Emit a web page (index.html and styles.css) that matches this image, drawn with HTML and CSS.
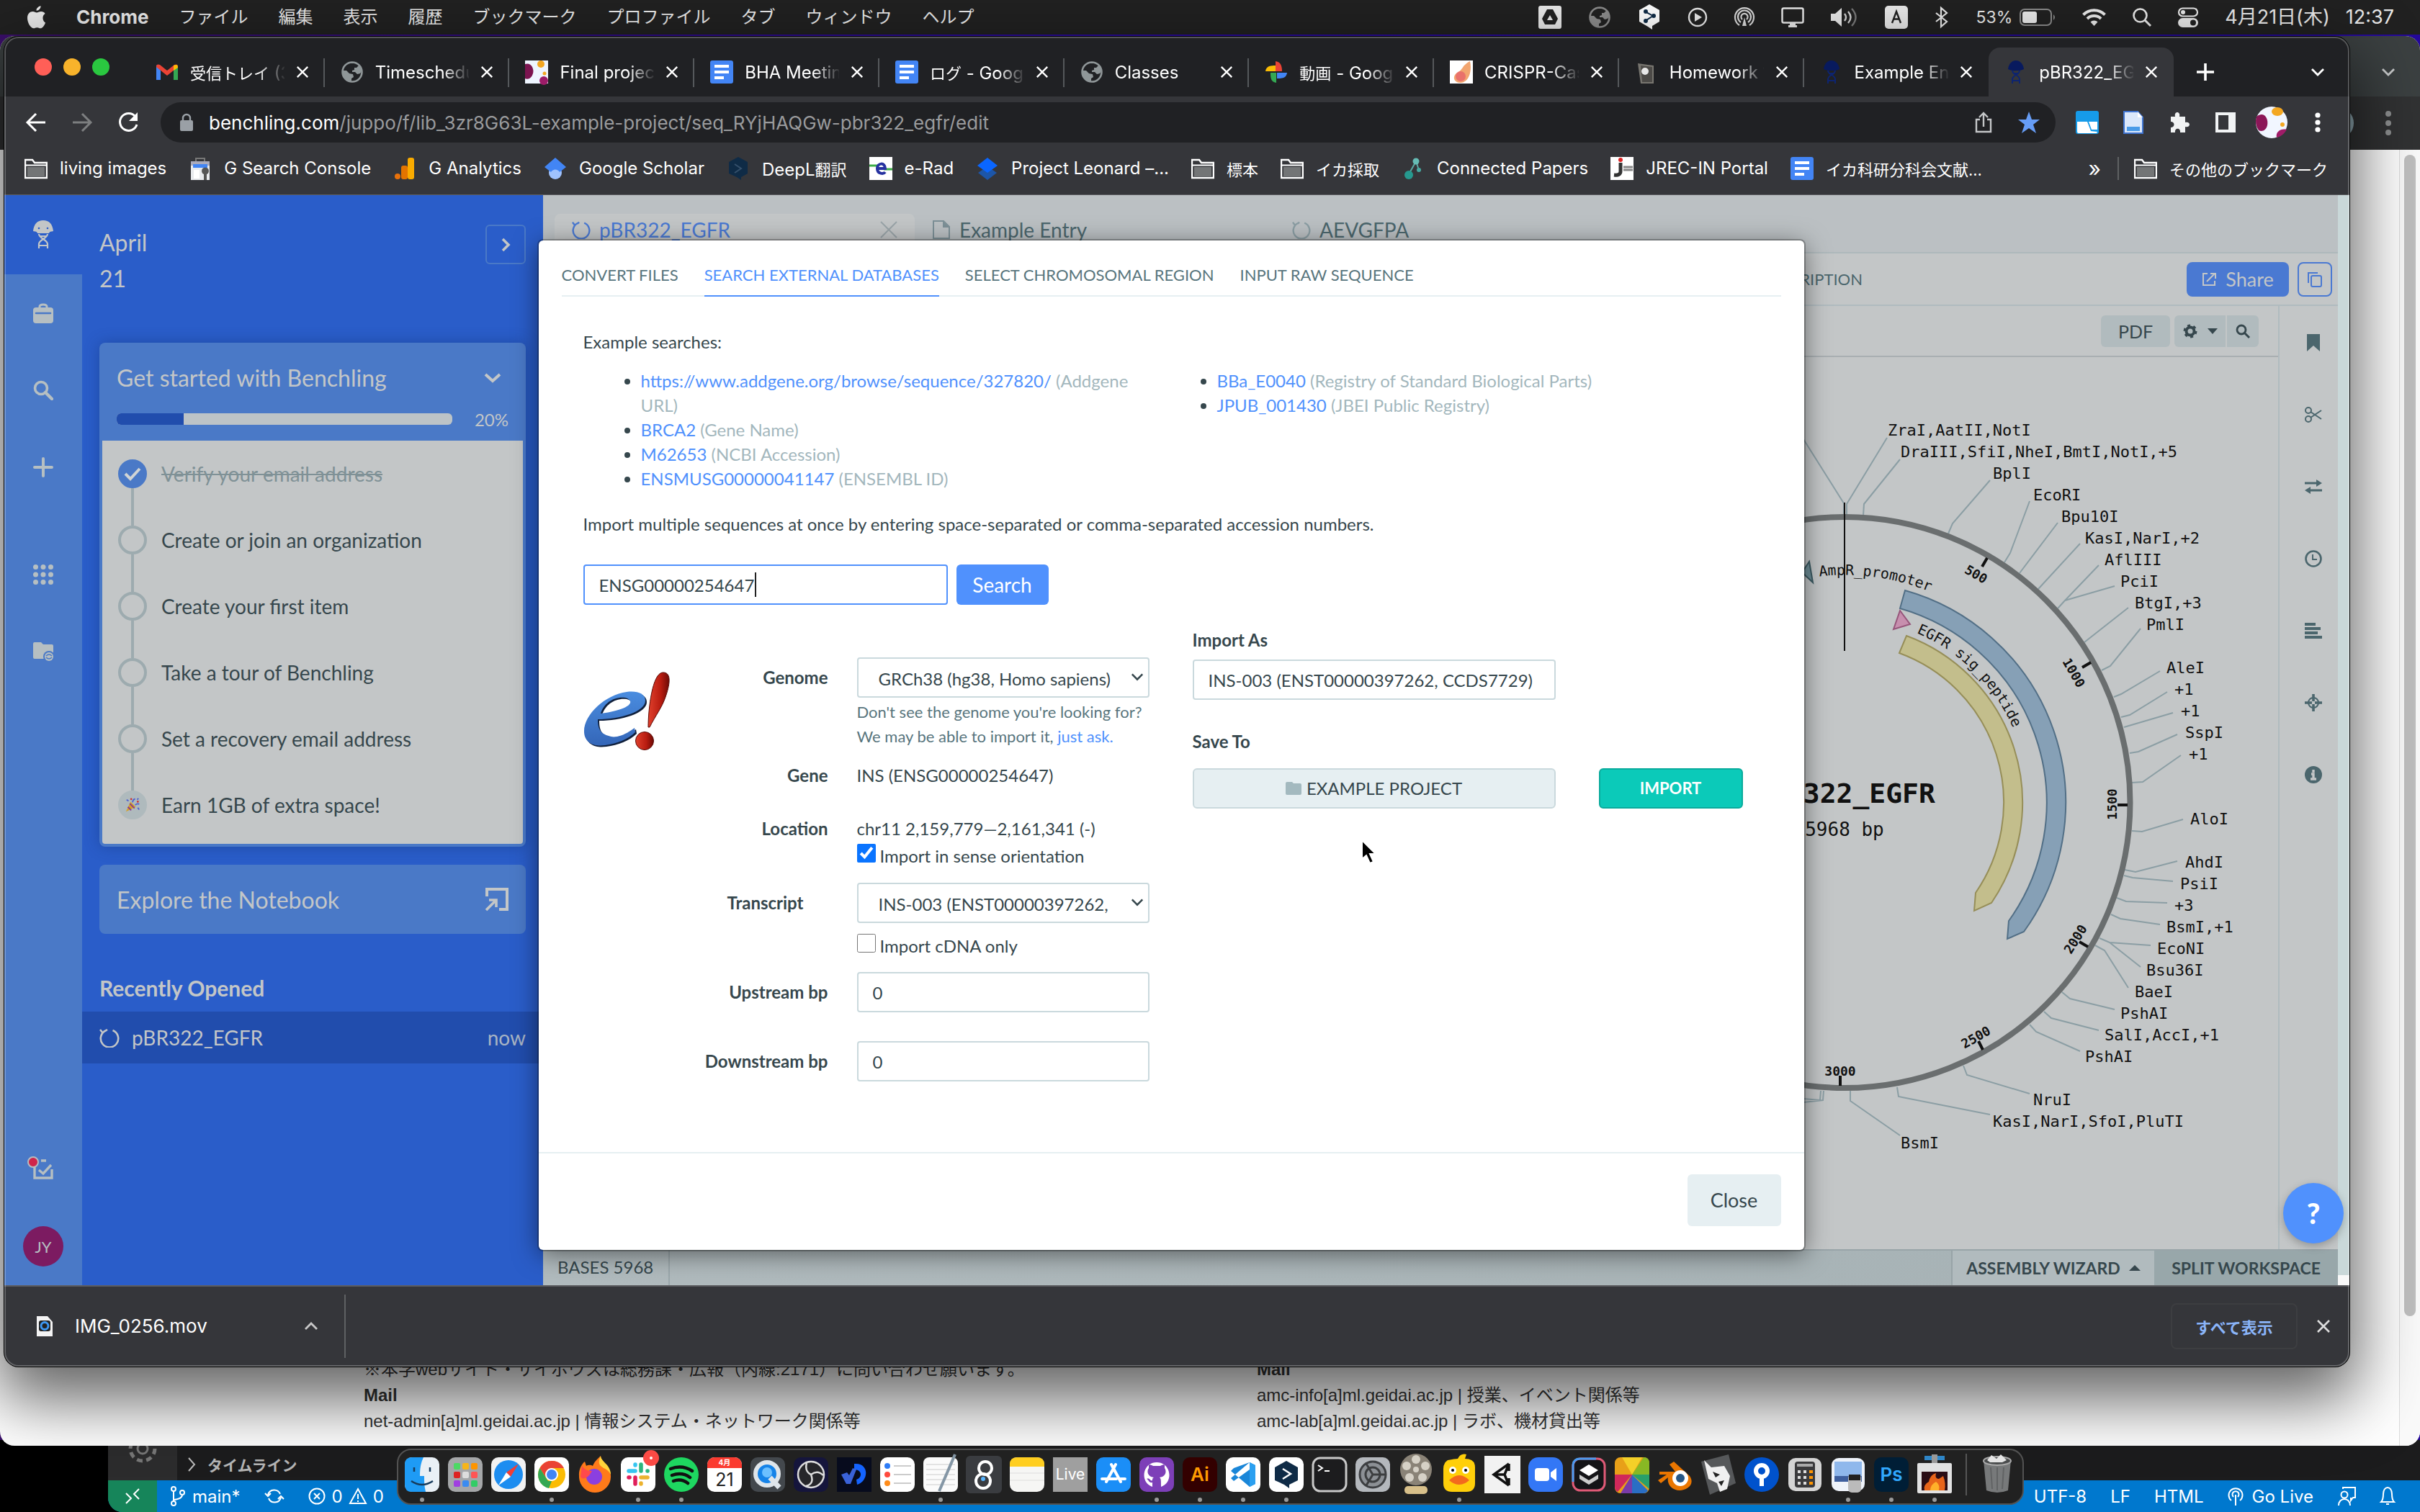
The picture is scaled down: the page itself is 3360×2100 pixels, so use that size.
FILE: index.html
```html
<!DOCTYPE html>
<html lang="ja">
<head>
<meta charset="utf-8">
<title>pBR322_EGFR · Benchling</title>
<link rel="stylesheet" href="styles.css">
</head>
<body>
<svg class="sprite" aria-hidden="true">
  <symbol id="i-x" viewBox="0 0 20 20"><path d="M2 2l16 16M18 2L2 18" fill="none" stroke="currentColor" stroke-width="2.6"/></symbol>
  <symbol id="i-down" viewBox="0 0 20 20"><path d="M2 6l8 8 8-8" fill="none" stroke="currentColor" stroke-width="2.800"/></symbol>
  <symbol id="i-folder" viewBox="0 0 32 32"><path d="M1 29V4h10l3 4h17v21z" fill="none" stroke="#fff" stroke-width="2.4"/><path d="M4 14h24v13H4z" fill="#737576"/><path d="M2 11.500h28" stroke="#fff" stroke-width="2"/></symbol>
  <symbol id="i-docs" viewBox="0 0 32 32"><rect width="32" height="32" rx="3" fill="#4385f5"/><path d="M6 8h20M6 16h20M6 24h13" stroke="#fff" stroke-width="4"/></symbol>
  <symbol id="i-globe" viewBox="0 0 32 32"><circle cx="16" cy="16" r="13.500" fill="none" stroke="currentColor" stroke-width="2.600"/><path d="M3 14l5 0 4 4 5 1 1 4-3 2v5C7 29 2 23 3 14zM13 4h9l3 3-3 3h-3v3l-3 1v2l4 0 3 3 4-1 2-3c0-8-6-13-13-13z" fill="currentColor"/></symbol>
  <symbol id="i-jelly" viewBox="0 0 28 40"><path d="M0 15C1 5 6 0 14 0s13 5 14 15c-3 1-5 0-6 3H6c-1-3-3-2-6-3z" fill="currentColor"/><circle cx="8" cy="11" r="1.300" fill="#2a5dc9"/><circle cx="20" cy="11" r="1.300" fill="#2a5dc9"/><path d="M8 19c0 6 12 8 12 14v6M20 19c0 6-12 8-12 14v6M9 22h10M9 35h10" fill="none" stroke="currentColor" stroke-width="2.200"/></symbol>
  <symbol id="i-plasmid" viewBox="0 0 28 28"><path d="M9.500 4a12.200 12.200 0 1 0 9 0M5 8L1 3M8 5l3-2" fill="none" stroke="currentColor" stroke-width="2.600"/></symbol>
  <symbol id="i-search" viewBox="0 0 28 28"><circle cx="11" cy="11" r="8.500" fill="none" stroke="currentColor" stroke-width="3.600"/><path d="M17 17l9 9" stroke="currentColor" stroke-width="4.400" stroke-linecap="round"/></symbol>
  <symbol id="i-benchfav" viewBox="0 0 32 32"><path d="M5 12c1-8 6-12 11-12s10 4 11 12c-5 3-17 3-22 0z" fill="#081a5e"/><path d="M11 14c0 6 10 6 10 12v6M21 14c0 6-10 6-10 12v6M12 18h8M12 28h8" fill="none" stroke="#0d2470" stroke-width="2"/></symbol>
</svg>

<div class="desktop">
  <header class="menubar">
    <nav class="menus">
      <svg class="apple" viewBox="0 0 28 34"><path d="M20 0c.4 3-2.600 7-6.500 7C13 4 16.500.500 20 0zM27 25c-2 5-4.500 8.500-7.500 8.500-2 0-2.600-1.200-5-1.200s-3.200 1.200-5 1.200C5 33.500 0 25 0 18 0 12 4 8.500 8 8.500c2.600 0 4.300 1.500 6 1.500s4-1.800 7-1.500c2 0 4.200 1 5.500 3-5 3-4 11 .500 13.500z" fill="#e8e8e8"/></svg>
      <b>Chrome</b><span>ファイル</span><span>編集</span><span>表示</span><span>履歴</span><span>ブックマーク</span><span>プロファイル</span><span>タブ</span><span>ウィンドウ</span><span>ヘルプ</span>
    </nav>
    <div class="status">
      <svg width="32" height="32" viewBox="0 0 32 32"><rect width="32" height="32" rx="3" fill="#e8e8e8"/><path d="M12 5h8l7 13-4 8H9l-4-8z" fill="#212121"/><path d="M16 13l4 7h-8z" fill="#e8e8e8"/></svg>
      <svg class="dim" width="32" height="32"><use href="#i-globe"/></svg>
      <svg width="32" height="36" viewBox="0 0 32 36"><path d="M16 0l14 8v16l-10 6v5l-6-4L2 24V8z" fill="#fff"/><path d="M12 11l9 5-9 6" fill="none" stroke="#0f2b46" stroke-width="2"/><circle cx="11" cy="10" r="3" fill="#0f2b46"/><circle cx="22" cy="16" r="3" fill="#0f2b46"/><circle cx="11" cy="23" r="3" fill="#0f2b46"/></svg>
      <svg width="28" height="28" viewBox="0 0 28 28"><circle cx="14" cy="14" r="12" fill="none" stroke="#e8e8e8" stroke-width="2.400"/><path d="M10 8l10 6-10 6z" fill="#e8e8e8"/></svg>
      <svg width="28" height="28" viewBox="0 0 28 28" fill="none" stroke="#d8d8d8" stroke-width="2.200"><path d="M7 25a13 13 0 1 1 14 0M9 21a9 9 0 1 1 10 0M11 17a4.600 4.600 0 1 1 6 0"/><path d="M14 14l3 12h-6z" fill="#d8d8d8" stroke="none"/></svg>
      <svg width="32" height="28" viewBox="0 0 32 28"><rect x="1.500" y="1.500" width="29" height="20" rx="2" fill="none" stroke="#e8e8e8" stroke-width="2.500"/><path d="M12 22h8v3h2v3H10v-3h2z" fill="#e8e8e8"/></svg>
      <svg width="38" height="28" viewBox="0 0 38 28"><path d="M0 9h6l9-8v26l-9-8H0z" fill="#e8e8e8"/><path d="M19 9q4 5 0 10M24 6q7 8 0 16" fill="none" stroke="#d0d0d0" stroke-width="2.400"/><path d="M29 2q11 12 0 24" fill="none" stroke="#777" stroke-width="2.400"/></svg>
      <svg width="32" height="32" viewBox="0 0 32 32"><rect width="32" height="32" rx="5" fill="#e8e8e8"/><path d="M10 24l6-16 6 16M12 18.500h8" fill="none" stroke="#212121" stroke-width="2.400"/></svg>
      <svg width="20" height="28" viewBox="0 0 20 28"><path d="M2 8l15 12-8 7V1l8 7L2 20" fill="none" stroke="#e8e8e8" stroke-width="2.200"/></svg>
      <span class="batt"><span>53%</span><svg width="50" height="24" viewBox="0 0 50 24"><rect x="1" y="1" width="43" height="22" rx="6" fill="none" stroke="#8a8a8a" stroke-width="2"/><rect x="4" y="4" width="20" height="16" rx="3" fill="#e8e8e8"/><path d="M47 8q4 4 0 8z" fill="#8a8a8a"/></svg></span>
      <svg width="33" height="24" viewBox="0 0 33 24" fill="none" stroke="#e8e8e8" stroke-width="4"><path d="M1.500 8.500a21 21 0 0 1 30 0M7 14a13.500 13.500 0 0 1 19 0"/><path d="M16.500 24l-5-5.500a7 7 0 0 1 10 0z" fill="#e8e8e8" stroke="none"/></svg>
      <svg width="26" height="26" viewBox="0 0 26 26"><circle cx="10.500" cy="10.500" r="9" fill="none" stroke="#e8e8e8" stroke-width="2.600"/><path d="M17 17l8 8" stroke="#e8e8e8" stroke-width="3"/></svg>
      <svg width="28" height="28" viewBox="0 0 28 28"><rect x="1" y="1.500" width="26" height="11" rx="5.500" fill="none" stroke="#e8e8e8" stroke-width="2.200"/><circle cx="7" cy="7" r="3" fill="#e8e8e8"/><rect y="15" width="28" height="13" rx="6.500" fill="#e8e8e8"/><circle cx="21" cy="21.500" r="4" fill="#212121"/></svg>
      <time><span>4月21日(木)</span><span>12:37</span></time>
    </div>
  </header>

  <section class="vscode">
    <aside class="activity"><svg width="56" height="56" viewBox="0 0 56 56"><circle cx="28" cy="28" r="17" fill="none" stroke="#777" stroke-width="5" stroke-dasharray="8 5.300"/><circle cx="28" cy="28" r="7" fill="none" stroke="#777" stroke-width="3"/></svg></aside>
    <div class="vs-main"><svg width="12" height="20" viewBox="0 0 12 20"><path d="M2 1l8 9-8 9" fill="none" stroke="#bbb" stroke-width="2"/></svg><b>タイムライン</b></div>
    <footer class="vs-status">
      <span class="remote"><svg width="24" height="24" viewBox="0 0 24 24"><path d="M3 8l7 7-7 7M21 2l-7 7 7 7" fill="none" stroke="#fff" stroke-width="2"/></svg></span>
      <span class="vs-left">
        <svg width="22" height="28" viewBox="0 0 22 28" fill="none" stroke="#fff" stroke-width="2"><circle cx="5" cy="4" r="3"/><circle cx="5" cy="24" r="3"/><circle cx="17" cy="9" r="3"/><path d="M5 7v14M17 12q0 6-12 7"/></svg><span>main*</span>
        <svg class="sync" width="28" height="24" viewBox="0 0 28 24" fill="none" stroke="#fff" stroke-width="2"><path d="M5 10a9 9 0 0 1 17-1M23 14a9 9 0 0 1-17 1M1 8l4 4 4-4M19 16l4-4 4 4"/></svg>
        <svg width="24" height="24" viewBox="0 0 24 24" fill="none" stroke="#fff" stroke-width="2"><circle cx="12" cy="12" r="10.500"/><path d="M8 8l8 8M16 8l-8 8"/></svg><span>0</span>
        <svg width="24" height="24" viewBox="0 0 24 24" fill="none" stroke="#fff" stroke-width="2"><path d="M12 2l11 20H1zM12 9v7M12 18v2"/></svg><span>0</span>
      </span>
      <span class="vs-right"><span>UTF-8</span><span>LF</span><span>HTML</span>
        <span class="golive"><svg width="22" height="26" viewBox="0 0 22 26" fill="none" stroke="#fff" stroke-width="2"><path d="M5 19a9.500 9.500 0 1 1 12 0M8 14a4.500 4.500 0 1 1 6 0M11 11v15"/></svg>Go Live</span>
        <svg width="26" height="26" viewBox="0 0 26 26" fill="none" stroke="#fff" stroke-width="2"><circle cx="10" cy="11" r="4.500"/><path d="M2 26c0-12 16-12 16 0M8 3V1h17v14h-3l-3 4v-4"/></svg>
        <svg width="22" height="26" viewBox="0 0 22 26" fill="none" stroke="#fff" stroke-width="2"><path d="M2 21q3-3 3-11c0-12 12-12 12 0q0 8 3 11zM9 24h4"/></svg>
      </span>
    </footer>
  </section>

  <section class="back-window">
    <div class="back-tabs"><svg width="20" height="20"><use href="#i-down"/></svg></div>
    <div class="back-tools"><span class="back-avatar"></span><svg width="8" height="34" viewBox="0 0 8 34"><g fill="#8d8f90"><circle cx="4" cy="4" r="4"/><circle cx="4" cy="17" r="4"/><circle cx="4" cy="30" r="4"/></g></svg></div>
    <div class="back-page">
      <div class="back-text">
        <p>※本学webサイト・サイボウズは総務課・広報（内線:2171）に問い合わせ願います。<br><b>Mail</b><br>net-admin[a]ml.geidai.ac.jp | 情報システム・ネットワーク関係等</p>
        <p><b>Mail</b><br>amc-info[a]ml.geidai.ac.jp | 授業、イベント関係等<br>amc-lab[a]ml.geidai.ac.jp | ラボ、機材貸出等</p>
      </div>
      <div class="back-scroll"><i></i></div>
    </div>
  </section>

  <section class="browser">
    <div class="tabstrip">
      <div class="lights"><i class="red"></i><i class="yellow"></i><i class="green"></i></div>
      <div class="tabs">
        <div class="tab"><svg viewBox="0 0 32 32"><path d="M1 6v21h6V14z" fill="#4285f4"/><path d="M31 6v21h-6V14z" fill="#34a853"/><path d="M1 9q0-5 5-3l10 8 10-8q5-2 5 3l-15 12z" fill="#ea4335"/><path d="M25 7q6-3 6 3l-6 4z" fill="#fbbc04"/></svg><span><span class="ja">受信トレイ</span> (3,</span><button aria-label="閉じる"><svg><use href="#i-x"/></svg></button></div>
        <div class="tab"><svg class="gl"><use href="#i-globe"/></svg><span>Timeschedule</span><button aria-label="閉じる"><svg><use href="#i-x"/></svg></button></div>
        <div class="tab"><svg viewBox="0 0 32 32"><path d="M0 0h32v32H0z" fill="#eef5ff"/><path d="M0 5c8-3 13 6 11 13s-7 9-11 7z" fill="#7b1450"/><circle cx="22" cy="5" r="5" fill="#f3a722"/><circle cx="26" cy="28" r="6" fill="#9c1c68"/><circle cx="27" cy="18" r="2.500" fill="#f3a722"/></svg><span>Final project</span><button aria-label="閉じる"><svg><use href="#i-x"/></svg></button></div>
        <div class="tab"><svg><use href="#i-docs"/></svg><span>BHA Meeting</span><button aria-label="閉じる"><svg><use href="#i-x"/></svg></button></div>
        <div class="tab"><svg><use href="#i-docs"/></svg><span><span class="ja">ログ</span> - Google</span><button aria-label="閉じる"><svg><use href="#i-x"/></svg></button></div>
        <div class="tab"><svg class="gl"><use href="#i-globe"/></svg><span>Classes</span><button aria-label="閉じる"><svg><use href="#i-x"/></svg></button></div>
        <div class="tab"><svg viewBox="0 0 32 32"><path d="M15 1c8 1 9 8 9 14h-9z" fill="#ea4335"/><path d="M31 17c-1 8-8 8-14 8v-8z" fill="#4285f4"/><path d="M16 31c-8-1-8-8-8-14h8z" fill="#34a853"/><path d="M1 15c1-8 8-8 14-8v8z" fill="#fbbc04"/></svg><span><span class="ja">動画</span> - Google</span><button aria-label="閉じる"><svg><use href="#i-x"/></svg></button></div>
        <div class="tab"><svg viewBox="0 0 32 32"><path d="M0 0h32v32H0z" fill="#fff"/><path d="M28 1c3 13-1 29-13 30C5 31 3 22 10 17c9-4 6-10 18-16z" fill="#f2a56f"/><circle cx="15" cy="22" r="7" fill="#e9716b"/></svg><span>CRISPR-Cas9</span><button aria-label="閉じる"><svg><use href="#i-x"/></svg></button></div>
        <div class="tab"><svg viewBox="0 0 32 32"><path d="M4 4l22 3v25H8z" fill="#77756f"/><path d="M8 7l16 2v21H10z" fill="#4c4a47"/><circle cx="14" cy="15" r="5" fill="#e8e8e8"/></svg><span>Homework 1</span><button aria-label="閉じる"><svg><use href="#i-x"/></svg></button></div>
        <div class="tab"><svg><use href="#i-benchfav"/></svg><span>Example Entry</span><button aria-label="閉じる"><svg><use href="#i-x"/></svg></button></div>
        <div class="tab active"><svg><use href="#i-benchfav"/></svg><span>pBR322_EGFR</span><button aria-label="閉じる"><svg><use href="#i-x"/></svg></button></div>
      </div>
      <button class="plain newtab" aria-label="新しいタブ"><svg width="24" height="24" viewBox="0 0 24 24"><path d="M12 0v24M0 12h24" stroke="#fff" stroke-width="3.600"/></svg></button>
      <button class="plain tabsearch" aria-label="タブを検索"><svg width="20" height="20"><use href="#i-down"/></svg></button>
    </div>

    <div class="toolbar">
      <button class="plain" aria-label="戻る"><svg width="28" height="28" viewBox="0 0 28 28"><path d="M27 14H3M14 2L2 14l12 12" fill="none" stroke="#fff" stroke-width="3"/></svg></button>
      <button class="plain" aria-label="進む"><svg width="28" height="28" viewBox="0 0 28 28"><path d="M1 14h24M14 2l12 12-12 12" fill="none" stroke="#7d7f80" stroke-width="3"/></svg></button>
      <button class="plain" aria-label="再読み込み"><svg width="28" height="28" viewBox="0 0 28 28"><path d="M24 6A12 12 0 1 0 26 17" fill="none" stroke="#fff" stroke-width="3"/><path d="M27 0v12H15z" fill="#fff"/></svg></button>
      <div class="urlbar">
        <svg width="18" height="24" viewBox="0 0 18 24"><rect y="9" width="18" height="15" rx="2" fill="#9aa0a6"/><path d="M4 10V6a5 5 0 0 1 10 0v4" fill="none" stroke="#9aa0a6" stroke-width="2.400"/></svg>
        <p>benchling.com<span>/juppo/f/lib_3zr8G63L-example-project/seq_RYjHAQGw-pbr322_egfr/edit</span></p>
        <svg width="24" height="30" viewBox="0 0 24 30"><path d="M7 11H2v17h20V11h-5M12 21V3M6 8l6-6 6 6" fill="none" stroke="#c4c6c8" stroke-width="2.400"/></svg>
        <svg width="30" height="30" viewBox="0 0 30 30"><path d="M15 0l4 11h11l-9 7 4 12-10-7-10 7 4-12-9-7h11z" fill="#669df6"/></svg>
      </div>
      <div class="exts">
        <svg width="32" height="32" viewBox="0 0 32 32"><rect width="32" height="32" rx="3" fill="#169be9"/><path d="M2 15h14l5 13 9 1q0 2-2 2H4q-2 0-2-2zM18 15h12v11h-8z" fill="#fff"/></svg>
        <svg width="28" height="32" viewBox="0 0 28 32"><path d="M1 1h19l7 8v22H1z" fill="#dbe8fb" stroke="#3f74d0" stroke-width="2"/><path d="M20 1v8h7z" fill="#fff"/><rect x="5" y="22" width="18" height="6" fill="#4a9be8"/></svg>
        <svg width="28" height="28" viewBox="0 0 28 28"><path d="M2 6h6c-2-8 8-8 6 0h8v8c8-2 8 8 0 6v8h-7c1-7-8-7-7 0H2v-7c6 0 6-8 0-8z" fill="#f1f3f4"/></svg>
        <svg width="28" height="28" viewBox="0 0 28 28"><path d="M2 2h24v24H2z" fill="none" stroke="#f1f3f4" stroke-width="4"/><path d="M18 2h8v24h-8z" fill="#f1f3f4"/></svg>
        <svg width="44" height="44" viewBox="0 0 44 44"><circle cx="22" cy="22" r="22" fill="#f1f6ff"/><path d="M1 14c10-8 17 2 15 12-2 8-8 9-12 7A22 22 0 0 1 1 14z" fill="#8b1758"/><ellipse cx="30" cy="7" rx="8" ry="6" fill="#f3a722"/><path d="M43 32c-8-2-16 3-14 11 7-2 11-6 14-11z" fill="#a01c68"/><circle cx="37" cy="25" r="3" fill="#f3a722"/></svg>
        <svg width="8" height="28" viewBox="0 0 8 28" fill="#fff"><circle cx="4" cy="4" r="3.600"/><circle cx="4" cy="14" r="3.600"/><circle cx="4" cy="24" r="3.600"/></svg>
      </div>
    </div>

    <nav class="bookmarks">
      <a href="#"><svg><use href="#i-folder"/></svg>living images</a>
      <a href="#"><svg viewBox="0 0 32 32"><path d="M10 6V2h12v4" fill="none" stroke="#777" stroke-width="2"/><path d="M3 6h26v26H3z" fill="#e8eaed"/><path d="M3 6h26v6H3z" fill="#aab"/><path d="M6 10h20v5H6z" fill="#4285f4"/><path d="M7 18h8v12H7z" fill="#fff"/><path d="M21 32V24a5 5 0 1 1 4 0v8z" fill="#555"/></svg>G Search Console</a>
      <a href="#"><svg viewBox="0 0 32 32"><rect x="20" y="1" width="9" height="30" rx="3" fill="#f9ab00"/><rect x="11" y="12" width="9" height="19" rx="3" fill="#e37400"/><circle cx="6" cy="27" r="4" fill="#e8710a"/></svg>G Analytics</a>
      <a href="#"><svg viewBox="0 0 32 32"><circle cx="16" cy="22" r="9" fill="#a0c3ff"/><path d="M16 1l15 13-9 7a7 7 0 0 0-12 0l-9-7z" fill="#4285f4"/></svg>Google Scholar</a>
      <a href="#"><svg viewBox="0 0 32 32"><path d="M16 0l13 7v16l-9 5v4l-6-4-11-5V7z" fill="#0f2b46"/><path d="M11 10l9 6-9 6" fill="none" stroke="#35506b" stroke-width="2"/></svg><span>DeepL<span class="ja">翻訳</span></span></a>
      <a href="#"><svg viewBox="0 0 32 32"><path d="M0 0h32v32H0z" fill="#fff"/><path d="M0 12h12M20 17h12" stroke="#3fae49" stroke-width="3"/><path d="M11 16h11c0-9-11-8-11 0s9 8 11 5" fill="none" stroke="#2632a0" stroke-width="4"/></svg>e-Rad</a>
      <a href="#"><svg viewBox="0 0 32 32"><path d="M16 13l13 9-13 10L3 22z" fill="#1d56a8"/><path d="M16 1l14 11-14 10L2 12z" fill="#0a66ff"/></svg>Project Leonard –...</a>
      <a href="#" class="ja"><svg><use href="#i-folder"/></svg>標本</a>
      <a href="#" class="ja"><svg><use href="#i-folder"/></svg>イカ採取</a>
      <a href="#"><svg viewBox="0 0 32 32"><path d="M20 6L10 24M20 6l4 12" stroke="#5ba9a4" stroke-width="2"/><circle cx="20" cy="6" r="4.500" fill="#66bcb5"/><circle cx="10" cy="25" r="6" fill="#26998f"/><circle cx="24" cy="18" r="3" fill="#47aaa2"/></svg>Connected Papers</a>
      <a href="#"><svg viewBox="0 0 32 32"><path d="M0 0h32v32H0z" fill="#fff"/><path d="M14 8v12q0 6-9 5" fill="none" stroke="#333" stroke-width="5"/><circle cx="14" cy="4" r="3" fill="#d22"/><path d="M18 14h13M18 18h13" stroke="#888" stroke-width="3"/></svg>JREC-IN Portal</a>
      <a href="#" class="ja"><svg><use href="#i-docs"/></svg>イカ科研分科会文献...</a>
      <span class="more">»</span><i class="bar"></i>
      <a href="#" class="ja"><svg><use href="#i-folder"/></svg>その他のブックマーク</a>
    </nav>

    <main class="app">
      <nav class="rail">
        <a href="#" class="brand" aria-label="Home"><svg width="30" height="40"><use href="#i-jelly"/></svg></a>
        <a href="#" aria-label="Projects"><svg viewBox="0 0 28 28"><rect y="6" width="28" height="22" rx="4" fill="currentColor"/><path d="M9 7V5q0-3 5-3t5 3v2" fill="none" stroke="currentColor" stroke-width="3"/><path d="M4 14h20" stroke="#4a79c7" stroke-width="2.600" stroke-linecap="round"/></svg></a>
        <a href="#" aria-label="Search"><svg><use href="#i-search"/></svg></a>
        <a href="#" aria-label="Create"><svg viewBox="0 0 28 28"><path d="M14 2v24M2 14h24" stroke="currentColor" stroke-width="4" stroke-linecap="round"/></svg></a>
        <a href="#" class="apps" aria-label="Apps"><svg viewBox="0 0 28 28" fill="currentColor"><circle cx="3.500" cy="3.500" r="3.500"/><circle cx="14" cy="3.500" r="3.500"/><circle cx="24.500" cy="3.500" r="3.500"/><circle cx="3.500" cy="14" r="3.500"/><circle cx="14" cy="14" r="3.500"/><circle cx="24.500" cy="14" r="3.500"/><circle cx="3.500" cy="24.500" r="3.500"/><circle cx="14" cy="24.500" r="3.500"/><circle cx="24.500" cy="24.500" r="3.500"/></svg></a>
        <a href="#" aria-label="Shared"><svg viewBox="0 0 28 28"><path d="M0 3q0-2 2-2h9l3 3h12q2 0 2 2v18H2q-2 0-2-2z" fill="currentColor"/><circle cx="22" cy="21" r="8" fill="#4a79c7"/><circle cx="22" cy="21" r="6" fill="currentColor"/><path d="M18 20q4-4 8 0M26 22q-4 4-8 0" fill="none" stroke="#4a79c7" stroke-width="1.500"/></svg></a>
        <span class="grow"></span>
        <a href="#" class="tasklink" aria-label="Tasks"><svg class="tasks" viewBox="0 0 38 34"><path d="M20 7h7M11 14v17h24V19M17 20l6 5 11-12" fill="none" stroke="currentColor" stroke-width="3.400"/><circle cx="9" cy="9" r="7" fill="#d0244b" stroke="#b6bcc0" stroke-width="2"/></svg></a>
        <a href="#" class="user">JY</a>
      </nav>

      <aside class="panel">
        <div class="datebox"><h2>April<br>21</h2><button aria-label="Collapse"><svg width="12" height="20" viewBox="0 0 12 20"><path d="M2 2l8 8-8 8" fill="none" stroke="#c3c6c7" stroke-width="3.600"/></svg></button></div>
        <section class="card">
          <header><h3>Get started with Benchling</h3><svg class="bold" width="26" height="24" viewBox="0 0 26 24"><path d="M3 8l10 9 10-9" fill="none" stroke="currentColor" stroke-width="4"/></svg></header>
          <div class="prog"><div class="track"><i style="width:20%"></i></div><span>20%</span></div>
          <ol>
            <li class="done"><i><svg viewBox="0 0 24 20"><path d="M2 10l7 7L22 3" fill="none" stroke="#d0d4d5" stroke-width="4"/></svg></i>Verify your email address</li>
            <li><i></i>Create or join an organization</li>
            <li><i></i>Create your first item</li>
            <li><i></i>Take a tour of Benchling</li>
            <li><i></i>Set a recovery email address</li>
            <li class="gift"><i><svg viewBox="0 0 24 24"><path d="M2 22L9 7l8 8z" fill="#d4a02c"/><path d="M5 15l5 5M8 10l7 7" stroke="#8a3a8e" stroke-width="2"/><path d="M12 8q1-5 4-5M16 12q4-3 6-1M3 4l3 2M19 4l2-2M20 16l2 3" stroke="#4d5fd0" stroke-width="2" fill="none"/><circle cx="20" cy="7" r="1.500" fill="#c33"/><circle cx="10" cy="3" r="1.500" fill="#c33"/></svg></i>Earn 1GB of extra space!</li>
          </ol>
        </section>
        <a href="#" class="explore">Explore the Notebook<svg width="32" height="32" viewBox="0 0 32 32"><path d="M2 12V2h28v28H19" fill="none" stroke="#c3c6c7" stroke-width="4"/><path d="M1 31l13-13M5 17h10v10" fill="none" stroke="#c3c6c7" stroke-width="3.600"/></svg></a>
        <h4>Recently Opened</h4>
        <a href="#" class="recent"><svg width="28" height="28"><use href="#i-plasmid"/></svg>pBR322_EGFR<span>now</span></a>
      </aside>

      <section class="workspace">
        <div class="doctabs">
          <div class="doctab on"><svg width="26" height="26"><use href="#i-plasmid"/></svg>pBR322_EGFR<svg class="close" width="24" height="24" viewBox="0 0 24 24"><path d="M1 1l22 22M23 1L1 23" stroke="currentColor" stroke-width="2"/></svg></div>
          <div class="doctab"><svg width="26" height="26" viewBox="0 0 26 26"><path d="M2 1h14l8 8v16H2z" fill="none" stroke="#7d9097" stroke-width="2"/><path d="M15 1l9 9h-9z" fill="#7d9097"/></svg>Example Entry</div>
          <div class="doctab"><svg class="faint" width="26" height="26"><use href="#i-plasmid"/></svg>AEVGFPA</div>
        </div>
        <div class="docbar"><span>DESCRIPTION</span><button class="share"><svg width="20" height="20" viewBox="0 0 20 20"><path d="M8 2H2v16h16v-6M12 2h7v7M18 2L7 13" fill="none" stroke="#c3c6c7" stroke-width="2"/></svg>Share</button><button class="copy" aria-label="Copy"><svg width="22" height="22" viewBox="0 0 22 22"><path d="M2 16V2h13" fill="none" stroke="currentColor" stroke-width="2"/><rect x="6" y="6" width="14" height="15" rx="2" fill="none" stroke="currentColor" stroke-width="2"/></svg></button></div>
        <div class="mapwrap">
          <div class="mapcol">
            <div class="maptools"><button class="pdf">PDF</button><div class="grp"><button aria-label="Settings"><svg width="20" height="20" viewBox="0 0 20 20"><circle cx="10" cy="10" r="5.500" fill="none" stroke="#36474d" stroke-width="4"/><circle cx="10" cy="10" r="8" fill="none" stroke="#36474d" stroke-width="3" stroke-dasharray="4 4.380"/></svg><svg width="14" height="8" viewBox="0 0 14 8"><path d="M0 0h14L7 8z" fill="#36474d"/></svg></button><button aria-label="Search"><svg width="20" height="20" viewBox="0 0 20 20"><circle cx="8" cy="8" r="6" fill="none" stroke="#36474d" stroke-width="2.800"/><path d="M12 12l7 7" stroke="#36474d" stroke-width="3"/></svg></button></div></div>
            <svg class="map" viewBox="754 496 2409 1238" preserveAspectRatio="xMidYMin meet">
              <defs><path id="arcA" d="M2526 800.500A316 316 0 0 1 2877 1114"/><path id="arcB" d="M2661 879A256 256 0 0 1 2817 1114"/></defs>
              <g fill="none" stroke="#8b9ea4" stroke-width="2">
                <path d="M2504 610L2560 699V716M2620 608L2564 700V716M2638 638L2588 700L2587 716M2763 667L2711 727L2705 741M2818 696L2791 768L2783 781M2857 726L2804 796M2888 755L2830 818M2914 785L2867 834L2857 845M2936 814L2867 834M2955 844L2894 892M2972 873L2930 925L2918 931M2999 932L2945 964L2935 968M3009 961L2957 993L2945 996M3017 990L2949 1010M3023 1020L2969 1044L2957 1046M3028 1049L2975 1086L2960 1087M3031 1138L2974 1155L2960 1154M3023 1196L2965 1211L2950 1208M3017 1224L2961 1219L2949 1216M3009 1254L2952 1252L2939 1247M2999 1284L2944 1276L2931 1270M2986 1313L2929 1309L2915 1303M2972 1343L2929 1309M2955 1372L2922 1320L2909 1313M2936 1402L2874 1387L2863 1378M2914 1431L2848 1414L2838 1405M2888 1460L2827 1433L2818 1423M2818 1519L2731 1493L2726 1480M2763 1548L2636 1523L2634 1510M2638 1577L2569 1529V1515M2504 1526L2527 1528L2528 1515M2504 1531L2531 1528L2532 1515"/>
              </g>
              <circle cx="2561" cy="1114.500" r="396.500" fill="none" stroke="#6a6e6f" stroke-width="8"/>
              <path d="M2561 698V904" stroke="#111" stroke-width="2"/>
              <path d="M2759 775L2752 787M2903 920L2891 927M2954 1118H2940M2899 1315L2887 1308M2753 1458L2747 1446M2555 1494V1508" stroke="#111" stroke-width="4"/>
              <path d="M2645 820A306 306 0 0 1 2810 1294L2787 1304L2789 1279A281 281 0 0 0 2638 845Z" fill="#86a0b6" stroke="#526f86" stroke-width="2"/>
              <path d="M2647 883A247 247 0 0 1 2765 1254L2741 1265L2743 1240A221 221 0 0 0 2637 907Z" fill="#c3be8c" stroke="#968e58" stroke-width="2"/>
              <path d="M2638 848L2652 867L2629 874Z" fill="#c78fae" stroke="#96557a" stroke-width="2"/>
              <path d="M2512 780L2517 809L2502 795Z" fill="#6f8f98" stroke="#3c5b63" stroke-width="2"/>
              <g class="arc"><text><textPath href="#arcA">AmpR_promoter</textPath></text><text><textPath href="#arcB">EGFR sig_peptide</textPath></text></g>
              <g class="tick">
                <text transform="translate(2744 797) rotate(30)" y="7">500</text><text transform="translate(2880 934) rotate(60)" y="7">1000</text><text transform="translate(2932 1117) rotate(-90)" y="7">1500</text><text transform="translate(2881 1304) rotate(-58)" y="7">2000</text><text transform="translate(2743 1440) rotate(-29)" y="7">2500</text><text transform="translate(2555 1487)" y="7">3000</text>
              </g>
              <text class="name" x="2561" y="1115">pBR322_EGFR</text><text class="size" x="2561" y="1161">5968 bp</text>
              <g class="site">
                <text x="2621" y="605">ZraI,AatII,NotI</text><text x="2639" y="635">DraIII,SfiI,NheI,BmtI,NotI,+5</text><text x="2767" y="665">BplI</text><text x="2823" y="695">EcoRI</text><text x="2862" y="725">Bpu10I</text><text x="2895" y="755">KasI,NarI,+2</text><text x="2922" y="785">AflIII</text><text x="2944" y="815">PciI</text><text x="2964" y="845">BtgI,+3</text><text x="2980" y="875">PmlI</text><text x="3008" y="935">AleI</text><text x="3019" y="965">+1</text><text x="3028" y="995">+1</text><text x="3034" y="1025">SspI</text><text x="3039" y="1055">+1</text><text x="3041" y="1145">AloI</text><text x="3034" y="1205">AhdI</text><text x="3027" y="1235">PsiI</text><text x="3019" y="1265">+3</text><text x="3008" y="1295">BsmI,+1</text><text x="2995" y="1325">EcoNI</text><text x="2980" y="1355">Bsu36I</text><text x="2964" y="1385">BaeI</text><text x="2944" y="1415">PshAI</text><text x="2922" y="1445">SalI,AccI,+1</text><text x="2895" y="1475">PshAI</text><text x="2823" y="1535">NruI</text><text x="2767" y="1565">KasI,NarI,SfoI,PluTI</text><text x="2639" y="1595">BsmI</text>
              </g>
            </svg>
          </div>
          <aside class="tools">
            <svg viewBox="0 0 24 24"><path d="M3 0h18v24l-9-8-9 8z" fill="currentColor"/></svg>
            <svg viewBox="0 0 24 24" fill="none" stroke="currentColor" stroke-width="2"><circle cx="5" cy="6" r="4"/><circle cx="5" cy="18" r="4"/><path d="M8 8l15 10M8 16L23 6"/></svg>
            <svg viewBox="0 0 24 24"><path d="M0 7h17M7 17h17" stroke="currentColor" stroke-width="3"/><path d="M16 2l8 5-8 5zM8 12l-8 5 8 5z" fill="currentColor"/></svg>
            <svg viewBox="0 0 24 24" fill="none" stroke="currentColor" stroke-width="2.600"><circle cx="12" cy="12" r="10.500"/><path d="M11 6v7h6" stroke-width="2"/></svg>
            <svg viewBox="0 0 24 24"><path d="M0 3h15M0 9h22M0 15h18M0 21h24" stroke="currentColor" stroke-width="3.800"/></svg>
            <svg viewBox="0 0 24 24" fill="none" stroke="currentColor"><circle cx="12" cy="12" r="7" stroke-width="2"/><path d="M12 0v10M12 14v10M0 12h10M14 12h10" stroke-width="3.600"/></svg>
            <svg viewBox="0 0 24 24"><circle cx="12" cy="12" r="12" fill="currentColor"/><path d="M12 5v4M9 11h3v8M8 18h8" stroke="#c3c6c7" stroke-width="3.400" fill="none"/></svg>
          </aside>
        </div>
        <footer class="bottombar"><span class="bases">BASES 5968</span><button class="asm">ASSEMBLY WIZARD<svg width="16" height="8" viewBox="0 0 16 8"><path d="M0 8h16L8 0z" fill="#36474d"/></svg></button><button class="split">SPLIT WORKSPACE</button></footer>
      </section>
      <div class="edge"></div>

      <div class="overlay">
        <section class="modal" role="dialog" aria-label="Import sequences">
          <nav class="mtabs"><a href="#">CONVERT FILES</a><a href="#" class="on">SEARCH EXTERNAL DATABASES</a><a href="#">SELECT CHROMOSOMAL REGION</a><a href="#">INPUT RAW SEQUENCE</a></nav>
          <div class="mbody">
            <p class="lead">Example searches:</p>
            <div class="examples">
              <ul><li><a href="#">https://www.addgene.org/browse/sequence/327820/</a> (Addgene URL)</li><li><a href="#">BRCA2</a> (Gene Name)</li><li><a href="#">M62653</a> (NCBI Accession)</li><li><a href="#">ENSMUSG00000041147</a> (ENSEMBL ID)</li></ul>
              <ul><li><a href="#">BBa_E0040</a> (Registry of Standard Biological Parts)</li><li><a href="#">JPUB_001430</a> (JBEI Public Registry)</li></ul>
            </div>
            <p>Import multiple sequences at once by entering space-separated or comma-separated accession numbers.</p>
            <div class="searchrow"><input class="focused" aria-label="Accession number" value="ENSG00000254647"><i class="caret"></i><button class="primary">Search</button></div>
            <div class="form">
              <div class="left">
                <svg class="ensembl" viewBox="0 0 120 110">
                  <defs><linearGradient id="eb" x1="0" y1="0" x2="0" y2="1"><stop offset="0" stop-color="#4a8de0"/><stop offset="1" stop-color="#3466b8"/></linearGradient><linearGradient id="er" x1="0" y1="0" x2="1" y2="0"><stop offset="0" stop-color="#e0402c"/><stop offset=".6" stop-color="#b81c10"/><stop offset="1" stop-color="#6d0a05"/></linearGradient></defs>
                  <path d="M20 66C50 66 86 56 86 40 86 30 74 26 60 28 30 32 0 60 1 84 2 100 16 104 30 102 46 100 62 94 72 84L71 78C58 88 44 93 35 89 24 86 20 80 20 66zM24 58C28 44 42 34 58 36 72 40 68 52 24 58z" fill="#10203c" transform="translate(2 2)"/>
                  <path d="M20 66C50 66 86 56 86 40 86 30 74 26 60 28 30 32 0 60 1 84 2 100 16 104 30 102 46 100 62 94 72 84L71 78C58 88 44 93 35 89 24 86 20 80 20 66zM24 58C28 44 42 34 58 36 72 40 68 52 24 58z" fill="url(#eb)"/>
                  <path d="M90 77C90 50 96 2 110 1c14-1 9 20 4 34-5 15-14 26-22 42z" fill="url(#er)" stroke="#5a0a06"/><ellipse cx="85" cy="96" rx="12.500" ry="12.500" fill="url(#er)" stroke="#5a0a06"/>
                </svg>
                <div class="rows">
                  <label for="genome">Genome</label>
                  <div><div class="sel"><select id="genome"><option>GRCh38 (hg38, Homo sapiens)</option></select><svg width="18" height="18"><use href="#i-down"/></svg></div><p class="hint">Don't see the genome you're looking for?<br>We may be able to import it, <a href="#">just ask.</a></p></div>
                  <span class="lab short">Gene</span><p class="val gene">INS (ENSG00000254647)</p>
                  <span class="lab short">Location</span>
                  <div><p class="val">chr11 2,159,779—2,161,341 (-)</p><label class="tick-row"><input type="checkbox" checked> Import in sense orientation</label></div>
                  <label for="tr" class="inset">Transcript</label>
                  <div class="trans"><div class="sel"><select id="tr"><option>INS-003 (ENST00000397262,</option></select><svg width="18" height="18"><use href="#i-down"/></svg></div><label class="tick-row cdna"><input type="checkbox"> Import cDNA only</label></div>
                  <label for="up">Upstream bp</label><input id="up" class="up" value="0">
                  <label for="down">Downstream bp</label><input id="down" value="0">
                </div>
              </div>
              <div class="right">
                <label for="as">Import As</label><input id="as" value="INS-003 (ENST00000397262, CCDS7729)">
                <p class="saveto">Save To</p>
                <div class="saverow"><button class="proj"><svg width="22" height="18" viewBox="0 0 22 18"><path d="M0 2q0-2 2-2h7l2 2h9q2 0 2 2v12q0 2-2 2H2q-2 0-2-2z" fill="#a3b9bf"/></svg>EXAMPLE PROJECT</button><button class="import">IMPORT</button></div>
              </div>
            </div>
          </div>
          <footer><button class="closebtn">Close</button></footer>
        </section>
      </div>
      <button class="help" aria-label="Help">?</button>
    </main>

    <footer class="downloads">
      <svg width="24" height="28" viewBox="0 0 24 28"><path d="M1 0h15l7 8v20H1z" fill="#f4f4f4"/><rect x="4" y="6" width="16" height="15" rx="3" fill="#222"/><circle cx="12" cy="13.500" r="5" fill="none" stroke="#3d97f2" stroke-width="3"/></svg>
      <span class="fname">IMG_0256.mov</span>
      <svg class="up-ch" width="20" height="20" viewBox="0 0 20 20"><path d="M2 14l8-8 8 8" fill="none" stroke="currentColor" stroke-width="2.800"/></svg>
      <i class="bar"></i>
      <button class="all">すべて表示</button>
      <svg class="dx" width="20" height="20"><use href="#i-x"/></svg>
    </footer>
  </section>

  <svg class="cursor" viewBox="0 0 24 34"><path d="M1 1v26l6-5 5 11 5-2-5-11h8z" fill="#000" stroke="#fff" stroke-width="2"/></svg>

  <nav class="dock">
    <span class="run"><svg viewBox="0 0 48 48"><rect width="48" height="48" rx="10" fill="#e9f0f6"/><path d="M10 0h16c-4 8-5 16-5 26h6c0 8 0 14 2 22H10Q0 48 0 38V10Q0 0 10 0z" fill="#1e9bf5"/><path d="M13 14v6M35 14v6M9 33q15 10 30 0" fill="none" stroke="#173b5c" stroke-width="2.500"/></svg></span>
    <span><svg viewBox="0 0 48 48"><rect width="48" height="48" rx="10" fill="#a5a7a9"/><rect x="8" y="8" width="9" height="9" rx="2" fill="#4cd964"/><rect x="20" y="8" width="9" height="9" rx="2" fill="#f7b51a"/><rect x="32" y="8" width="9" height="9" rx="2" fill="#ff9500"/><rect x="8" y="20" width="9" height="9" rx="2" fill="#d22"/><rect x="20" y="20" width="9" height="9" rx="2" fill="#ddd"/><rect x="32" y="20" width="9" height="9" rx="2" fill="#f55"/><rect x="8" y="32" width="9" height="9" rx="2" fill="#a040e0"/><rect x="20" y="32" width="9" height="9" rx="2" fill="#3a8bf0"/><rect x="32" y="32" width="9" height="9" rx="2" fill="#3c6"/></svg></span>
    <span><svg viewBox="0 0 48 48"><rect width="48" height="48" rx="10" fill="#f2f2f2"/><circle cx="24" cy="24" r="20" fill="#1d8df0"/><path d="M38 9L27 27l-6-6z" fill="#f43d33"/><path d="M10 39l11-18 6 6z" fill="#fff"/></svg></span>
    <span class="run"><svg viewBox="0 0 48 48"><rect width="48" height="48" rx="10" fill="#fff"/><circle cx="24" cy="24" r="19" fill="#fbbc04"/><path d="M24 5A19 19 0 0 1 41 15H24L16 28 7.500 15A19 19 0 0 1 24 5z" fill="#ea4335"/><path d="M7.500 15L19 33l5 0-4 10A19 19 0 0 1 7.500 15z" fill="#34a853"/><circle cx="24" cy="24" r="9" fill="#fff"/><circle cx="24" cy="24" r="7" fill="#4285f4"/></svg></span>
    <span><svg viewBox="0 0 48 48"><path d="M2 26C1 15 8 7 10 6l2 6c4-2 7-1 9 0 2-6 7-10 11-14 0 8 14 14 14 28A22 22 0 0 1 2 28z" fill="#ff7a1a"/><path d="M32-2c0 8 14 12 14 26-4-8-10-8-14-12s-2-9 0-14z" fill="#ffd43a"/><circle cx="23" cy="27" r="11" fill="#8b3fe0"/><path d="M6 12q6 8 14 7l-4 6q-8 8-12 2z" fill="#ff4a4a"/></svg></span>
    <span class="run"><svg viewBox="0 0 48 48"><rect width="48" height="48" rx="10" fill="#fff"/><g stroke-width="5.500" stroke-linecap="round"><path d="M20 10v1M11 19h9" stroke="#36c5f0"/><path d="M28 10v9M37 19h0.100" stroke="#2eb67d"/><path d="M28 28h9M28 36v1" stroke="#ecb22e"/><path d="M20 28v9M11 28h1" stroke="#e01e5a"/></g><circle cx="42" cy="1" r="11" fill="#fb4a45"/><circle cx="42" cy="1" r="2" fill="#fff"/></svg></span>
    <span class="run"><svg viewBox="0 0 48 48"><circle cx="24" cy="24" r="24" fill="#1ed760"/><path d="M9 16q16-6 30 3M11 25q14-5 25 3M13 33q11-4 20 3" fill="none" stroke="#111" stroke-width="4.500" stroke-linecap="round"/></svg></span>
    <span class="cal"><em>4月</em><strong>21</strong></span>
    <span><svg viewBox="0 0 48 48"><rect width="48" height="48" rx="10" fill="#43484d"/><circle cx="23" cy="23" r="16" fill="#1583e8" stroke="#dfe5ea" stroke-width="6"/><path d="M27 28l13 14" stroke="#dfe5ea" stroke-width="7"/><circle cx="23" cy="21" r="7" fill="#6cc0ff"/></svg></span>
    <span><svg viewBox="0 0 48 48"><rect width="48" height="48" rx="10" fill="#15153c"/><circle cx="24" cy="24" r="18" fill="#26262a" stroke="#ddd" stroke-width="2.500"/><path d="M18 8q-3 12 6 16M41 25q-8-8-17-1M17 40q12-3 7-16" fill="none" stroke="#ddd" stroke-width="2.500"/></svg></span>
    <span><svg viewBox="0 0 48 48"><path d="M0 0h48v48H0z" fill="#070b1d"/><path d="M24 9c22-2 20 25 4 29l-1-7c9-3 8-14-3-14z" fill="#1463ff"/><path d="M6 24l8-3 3 4 5-10 5 2-8 20h-6z" fill="#3a62d8"/></svg></span>
    <span><svg viewBox="0 0 48 48"><rect width="48" height="48" rx="10" fill="#fff"/><path d="M19 12h24M19 24h24M19 36h24" stroke="#ccc" stroke-width="2"/><circle cx="10" cy="12" r="4" fill="#2d7cf6"/><circle cx="10" cy="24" r="4" fill="#ff4a3d"/><circle cx="10" cy="36" r="4" fill="#ff8c1a"/></svg></span>
    <span class="run"><svg viewBox="0 0 48 48"><rect width="48" height="48" rx="8" fill="#fbfbfb"/><path d="M4 10h40M4 17h40M4 24h40M4 31h40M4 38h40" stroke="#ccc"/><path d="M44-4L22 47" stroke="#8496a5" stroke-width="4"/></svg></span>
    <span><svg viewBox="0 0 48 48"><rect x="-1" y="-2" width="50" height="52" rx="6" fill="#3a3c40"/><circle cx="26" cy="15" r="9" fill="none" stroke="#fff" stroke-width="4"/><circle cx="23" cy="33" r="10" fill="none" stroke="#fff" stroke-width="4"/><circle cx="23" cy="30" r="3" fill="#58b5ff"/></svg></span>
    <span><svg viewBox="0 0 48 48"><rect width="48" height="48" rx="10" fill="#f6f6f4"/><path d="M0 13V10Q0 0 10 0h28q10 0 10 10v3z" fill="#ffce1f"/><path d="M0 22h48M0 32h48" stroke="#ddd"/></svg></span>
    <span class="live">Live</span>
    <span><svg viewBox="0 0 48 48"><rect width="48" height="48" rx="10" fill="#1b8ef7"/><path d="M27 10L14 34M21 10l13 24M8 30h20M33 30h7" fill="none" stroke="#fff" stroke-width="4" stroke-linecap="round"/></svg></span>
    <span class="run"><svg viewBox="0 0 48 48"><rect width="48" height="48" rx="10" fill="#7d3fb8"/><path d="M24 7c-20 0-24 28-6 34v-6c-5 1-5-4-8-5 5-2 5 4 8 2 0-2 0-3 2-4-9-1-10-9-7-13l0-5c3 0 4 1 6 2h10c2-1 3-2 6-2v5c3 4 2 12-7 13 2 2 2 3 2 13 18-6 14-34-6-34z" fill="#fff"/></svg></span>
    <span class="run adobe ai">Ai</span>
    <span class="run"><svg viewBox="0 0 48 48"><rect width="48" height="48" rx="10" fill="#fff"/><path d="M33 7l8 4v26l-8 4L7 19l4-4zM33 7L7 29l4 4 22-16z" fill="#1a86d8"/><path d="M33 7l8 4v26l-8 4z" fill="#2ba0f0"/></svg></span>
    <span class="run"><svg viewBox="0 0 48 48"><rect width="48" height="48" rx="10" fill="#fff"/><path d="M24 5l16 9v18l-12 6v5l-7-5-13-6V14z" fill="#0f2b46"/><path d="M19 16l11 7-11 7" fill="none" stroke="#fff" stroke-width="2.500"/></svg></span>
    <span><svg viewBox="0 0 48 48"><rect x="1" y="1" width="46" height="46" rx="10" fill="#1c1c1e" stroke="#c8c8c8" stroke-width="3"/><path d="M8 11l6 4-6 4M17 19h7" fill="none" stroke="#fff" stroke-width="2"/></svg></span>
    <span><svg viewBox="0 0 48 48"><rect width="48" height="48" rx="10" fill="#b4b8bd"/><circle cx="24" cy="24" r="18" fill="#8c9095" stroke="#3d3f42" stroke-width="3"/><circle cx="24" cy="24" r="10" fill="none" stroke="#3c3e40" stroke-width="3"/><path d="M24 24h17M24 24L15 9M24 24l-9 15" stroke="#3c3e40" stroke-width="3"/></svg></span>
    <span><svg viewBox="0 0 48 48"><circle cx="24" cy="17" r="22" fill="#8a8377"/><g fill="#d6d1c6"><circle cx="24" cy="3" r="6"/><circle cx="37" cy="12" r="6"/><circle cx="33" cy="28" r="6"/><circle cx="15" cy="28" r="6"/><circle cx="11" cy="12" r="6"/><circle cx="24" cy="17" r="4"/></g><rect x="8" y="40" width="32" height="11" rx="5" fill="#d8c08a"/></svg></span>
    <span class="run"><svg viewBox="0 0 48 48"><path d="M8 4q10-2 14-2 4-8 12-6l-2 6q14 0 14 12v22q0 12-12 12H14Q2 48 2 36V16Q2 8 8 4z" fill="#ffcf0a"/><circle cx="15" cy="18" r="5" fill="#fff"/><circle cx="33" cy="18" r="5" fill="#fff"/><circle cx="15" cy="18" r="2"/><circle cx="33" cy="18" r="2"/><path d="M10 32q14-14 28 0-14 12-28 0z" fill="#f36a1d"/></svg></span>
    <span><svg viewBox="0 0 48 48"><path d="M-1-2h50v52H-1z" fill="#f2f2f2"/><path d="M33 9L12 24l21 15M33 9l-6 15 6 15M12 24h15M33 9v10M33 39V29" fill="none" stroke="#111" stroke-width="3.500"/></svg></span>
    <span><svg viewBox="0 0 48 48"><rect width="48" height="48" rx="14" fill="#3377f6"/><rect x="9" y="15" width="20" height="18" rx="4" fill="#fff"/><path d="M31 21l8-6v18l-8-6z" fill="#fff"/></svg></span>
    <span><svg viewBox="0 0 48 48"><rect x="2" y="2" width="44" height="44" rx="10" fill="#141417" stroke="#e05a77" stroke-width="3"/><path d="M2 34V12Q2 2 12 2h22" fill="none" stroke="#4a9bf0" stroke-width="3"/><path d="M24 10l13 8-13 8-13-8z" fill="#fff"/><path d="M11 24l13 8 13-8v6l-13 8-13-8z" fill="#ccc"/></svg></span>
    <span><svg viewBox="0 0 48 48"><rect width="48" height="50" rx="8" fill="#e8a018"/><path d="M24 24L10 0h28z" fill="#f4d028"/><path d="M24 24L40 0q8 0 8 8v16z" fill="#88b824"/><path d="M24 24h24v20z" fill="#29a06a"/><path d="M24 24l22 22q-2 4-6 4H24z" fill="#2a6ec4"/><path d="M24 24v26H8z" fill="#7a3ba8"/><path d="M24 24L4 48q-4-2-4-8V24z" fill="#d0285a"/></svg></span>
    <span><svg viewBox="0 0 48 48"><path d="M2 20h22L16 10l6-4 22 20c8 12-4 20-14 20S12 38 14 28l-10 8-4-4 12-8H2z" fill="#ea7600"/><circle cx="31" cy="29" r="11" fill="#fff"/><circle cx="31" cy="29" r="6" fill="#265787"/></svg></span>
    <span><svg viewBox="0 0 48 48"><path d="M0 6L38-4l10 40-36 16z" fill="#56585a"/><path d="M4 4l10 10 18-2 8 14-4 18-10 4-4-12-12-6z" fill="#f0f0f0"/><path d="M16 20l10 4-6 4zM24 34l8-2-4 8z" fill="#222"/></svg></span>
    <span><svg viewBox="0 0 48 48"><circle cx="24" cy="24" r="24" fill="#0052cc"/><circle cx="24" cy="19" r="8" fill="none" stroke="#fff" stroke-width="6"/><path d="M24 28v12" stroke="#fff" stroke-width="6"/></svg></span>
    <span><svg viewBox="0 0 48 48"><rect x="1" y="1" width="46" height="46" rx="10" fill="#d4d4d4"/><rect x="10" y="6" width="28" height="36" rx="4" fill="#3a3a3c"/><path d="M13 11h22" stroke="#aaa" stroke-width="4"/><path d="M14 20h4M22 20h4M14 28h4M22 28h4M14 36h4M22 36h4" stroke="#ddd" stroke-width="4"/><path d="M30 20h5M30 28h5M30 36h5" stroke="#ff9500" stroke-width="4"/></svg></span>
    <span class="run"><svg viewBox="0 0 48 48"><rect x="1" y="1" width="46" height="46" rx="10" fill="#eef3fa"/><path d="M5 6h38v20H5z" fill="#8fb8ec"/><path d="M5 26h38v8H5z" fill="#3e5f9e"/><rect x="24" y="24" width="18" height="25" rx="5" fill="#bbb"/><path d="M25 24h16v8H25z" fill="#222"/></svg></span>
    <span class="run adobe ps">Ps</span>
    <span class="run"><svg viewBox="0 0 48 48"><path d="M20-4h8v14h-8z" fill="#999"/><path d="M10-2h10v6H10zM28-2h10v6H28z" fill="#2e86c8"/><rect x="0" y="8" width="48" height="42" rx="2" fill="#e2e2e2"/><path d="M6 20h36v26H6z" fill="#2a0c14"/><path d="M10 46q-2-8 6-12 2-10 10-12-2 8 4 8l6-4q4 10 2 20z" fill="#e8641a"/><path d="M18 46q0-8 8-12 6 4 4 12z" fill="#ffb02a"/></svg></span>
    <i class="dsep"></i>
    <span class="trash"><svg viewBox="0 0 48 48"><path d="M5 4h38l-4 42q-15 6-30 0z" fill="#77797a"/><ellipse cx="24" cy="5" rx="19" ry="6" fill="#4a4c4d" stroke="#aaa" stroke-width="2"/><path d="M10 4l6-7 7 5 6-6 8 8-6 3H14z" fill="#e4e4e4"/><path d="M15 14l2 30M24 14v32M33 14l-2 30" stroke="#616364" stroke-width="2"/></svg></span>
  </nav>
</div>
</body>
</html>
```
FILE: styles.css
```css
* { box-sizing: border-box; }
body { margin: 0; background: #000; font-family: Inter, "Noto Sans CJK JP", sans-serif; font-size: 24px; color: #fff; }
a { color: inherit; text-decoration: none; }
button, input, select { font: inherit; color: inherit; }
button { border: 0; background: none; padding: 0; cursor: pointer; }
h2, h3, h4, p, ul, ol { margin: 0; padding: 0; }
svg { display: block; flex: none; overflow: visible; }
.sprite { position: absolute; width: 0; height: 0; }
.desktop { position: relative; min-height: 100vh; overflow: hidden; background: linear-gradient(90deg, #3b0f6b, #2b0b9c 40%, #25099a); }

/* menu bar */
.menubar { height: 48px; background: #212121; display: flex; justify-content: space-between; align-items: center; padding: 0 36px 0 38px; color: #e8e8e8; }
.menus, .status { display: flex; align-items: center; gap: 42px; line-height: 46px; white-space: nowrap; }
.menus b { font-size: 26px; font-weight: 700; }
.apple { width: 26px; height: 32px; }
.status { gap: 37px; font-size: 27px; }
.status time { display: flex; gap: 22px; }
.dim { color: #8b8b8b; }
.batt { display: flex; align-items: center; gap: 10px; font-size: 23px; }

/* editor window peeking out below */
.vscode { position: absolute; left: 0; right: 0; bottom: 0; height: 100px; padding-left: 150px; background: #000; display: grid; grid-template-columns: 96px 1fr; grid-template-rows: 56px 44px; }
.activity { background: #2c2c2d; padding-left: 20px; overflow: hidden; }
.activity svg { margin-top: -16px; }
.vs-main { background: #1c1c1d; display: flex; align-items: center; gap: 16px; padding: 12px 0 0 14px; color: #b5b5b5; font-size: 21px; }
.vs-status { grid-column: 1 / 3; background: #0078ce; border-radius: 0 0 0 20px; display: flex; align-items: center; overflow: hidden; }
.remote { width: 68px; height: 44px; background: #16855a; display: flex; align-items: center; justify-content: center; }
.vs-left { display: flex; align-items: center; gap: 9px; padding-left: 18px; }
.sync { margin: 0 24px; }
.vs-right { margin-left: auto; display: flex; align-items: center; gap: 33px; padding-right: 34px; }
.golive { display: flex; gap: 12px; align-items: center; }

/* browser window at the back */
.back-window { position: absolute; inset: 50px 0 92px 0; background: #fff; border-radius: 20px; overflow: hidden; display: flex; flex-direction: column; }
.back-tabs { height: 84px; background: #3b4041; display: flex; align-items: center; justify-content: flex-end; padding: 16px 34px 0 0; color: #c8cacb; }
.back-tools { height: 74px; background: #313233; display: flex; align-items: center; justify-content: flex-end; gap: 44px; padding-right: 40px; }
.back-avatar { width: 44px; height: 44px; border-radius: 50%; background: #8ea7b0; }
.back-page { flex: 1; display: flex; justify-content: space-between; align-items: flex-end; }
.back-text { display: grid; grid-template-columns: 1240px auto; align-items: end; padding: 0 0 16px 505px; color: #333; line-height: 36px; font-family: "Liberation Sans", "Noto Sans CJK JP", sans-serif; }
.back-scroll { align-self: stretch; width: 29px; border-left: 1px solid #ddd; padding: 7px 6px 180px; background: #fafafa; }
.back-scroll i { display: block; height: 100%; border-radius: 8px; background: #bfbfbf; }

/* front browser window */
.browser { position: absolute; inset: 51px 98px 202px 6px; border-radius: 20px; background: #35363a; display: flex; flex-direction: column; overflow: clip; box-shadow: 0 0 0 1px #000, 0 36px 90px 10px rgba(0,0,0,.62); }
.browser::after { content: ""; position: absolute; inset: 0; border: 2px solid rgba(255,255,255,.24); border-radius: 20px; pointer-events: none; }
.tabstrip { height: 83px; background: #202124; display: flex; align-items: flex-end; }
.lights { width: 188px; display: flex; gap: 16px; padding: 0 0 29px 42px; }
.lights i { width: 24px; height: 24px; border-radius: 50%; }
.red { background: #ff5f57; } .yellow { background: #f8b32b; } .green { background: #2ac840; }
.ja { font-size: 22px; }
.tabs { flex: 0 1 2824px; min-width: 0; display: grid; grid-template-columns: repeat(11, 1fr); }
.tab { position: relative; height: 68px; display: flex; align-items: center; padding-left: 22px; min-width: 0; }
.tab > svg { width: 32px; height: 32px; }
.tab .gl { color: #8f9698; }
.tab > span { flex: 1; margin-left: 16px; min-width: 0; overflow: hidden; white-space: nowrap; -webkit-mask: linear-gradient(90deg, #000 72%, transparent 102%); mask: linear-gradient(90deg, #000 72%, transparent 102%); }
.tab button { padding: 4px 22px 4px 16px; }
.tab button svg { width: 18px; height: 18px; }
.tab:nth-child(-n+9)::after { content: ""; position: absolute; right: 0; top: 15px; height: 40px; border-right: 2px solid #55585b; }
.tab.active { background: #35363a; border-radius: 16px 16px 0 0; }
.plain { display: flex; align-items: center; justify-content: center; }
.newtab, .tabsearch { height: 68px; width: 88px; }
.tabsearch { margin-left: auto; color: #fff; }
.toolbar { height: 72px; display: flex; align-items: center; }
.toolbar > .plain { width: 64px; }
.toolbar > .plain:first-child { margin-left: 12px; }
.urlbar { flex: 1; margin-left: 13px; height: 56px; border-radius: 28px; background: #202124; display: flex; align-items: center; gap: 36px; padding: 0 22px 0 27px; font-size: 26px; white-space: nowrap; }
.urlbar p { flex: 1; margin-left: -14px; }
.urlbar span { color: #9a9b9d; }
.exts { width: 408px; display: grid; grid-template-columns: repeat(6, 64px); justify-items: center; align-items: center; padding-left: 12px; }
.bookmarks { height: 65px; display: flex; align-items: center; gap: 31px; padding: 0 30px 9px 28px; white-space: nowrap; border-bottom: 1px solid #5c5d60; }
.bookmarks a { display: flex; align-items: center; gap: 17px; }
.bookmarks svg { width: 32px; height: 32px; }
.more { margin-left: auto; font-size: 30px; }
.bar { width: 2px; height: 32px; background: #5f6163; }
.bookmarks .bar { margin: 0 -10px 0 -8px; }

/* application */
.app { position: relative; flex: 1; min-height: 0; display: flex; font-family: Lato, "Noto Sans", sans-serif; color: #c3c6c7; overflow: hidden; }
.rail { width: 108px; background: #4a79c7; display: flex; flex-direction: column; align-items: center; color: #b6bfc2; }
.rail a { height: 107px; display: flex; align-items: center; justify-content: center; }
.rail a svg { width: 28px; height: 28px; }
.rail .brand { width: 108px; height: 110px; background: #2a5dc9; color: #c3c6c7; }
.rail .brand svg { width: 28px; height: 40px; }
.rail .apps { margin-top: 42px; }
.grow { flex: 1; }
.rail .tasklink { margin-bottom: 28px; }
.rail a .tasks { width: 38px; height: 34px; margin-right: 8px; }
.rail .user { width: 56px; height: 56px; border-radius: 50%; background: #7c1b61; margin-bottom: 26px; font-size: 22px; }
.panel { width: 640px; background: #2a5dc9; display: flex; flex-direction: column; padding: 0 24px; }
.datebox { display: flex; justify-content: space-between; align-items: flex-start; padding: 41px 0 0; height: 205px; }
.datebox h2 { font-size: 32px; font-weight: 400; line-height: 50px; }
.datebox h2, .card h3 { font-weight: 400; }
.datebox button { width: 56px; height: 55px; border: 2px solid #4a79c7; border-radius: 6px; display: flex; align-items: center; justify-content: center; }
.card { background: #4a79c7; border-radius: 8px; padding: 0 4px 4px; box-shadow: 0 0 20px rgba(20,50,120,.45); }
.card header { display: flex; justify-content: space-between; align-items: center; padding: 22px 29px 0 20px; height: 74px; }
.card h3 { font-size: 32px; }
.prog { display: flex; align-items: center; gap: 31px; padding: 2px 20px 0; height: 62px; font-size: 24px; }
.track { flex: 1; height: 16px; border-radius: 6px; background: #bcc3c7; overflow: hidden; }
.track i { display: block; height: 100%; background: #214dad; }
.card ol { background: #c3c6c7; list-style: none; color: #36474d; font-size: 28px; border-radius: 0 0 4px 4px; height: 560px; padding-left: 22px; }
.card li { position: relative; height: 92px; display: flex; align-items: center; gap: 20px; }
.card li i { position: relative; z-index: 1; width: 40px; height: 40px; border: 4px solid #9dabaf; border-radius: 50%; background: #c3c6c7; display: flex; align-items: center; justify-content: center; }
.card li + li::before { content: ""; position: absolute; left: 18px; top: -26px; height: 52px; border-left: 4px solid #9dabaf; }
.done { color: #7f9196; text-decoration: line-through; }
.card .done i { background: #4a79c7; border-color: #4a79c7; }
.card .gift i { background: #afbabd; border-color: #afbabd; }
.card li i svg { width: 24px; height: 22px; }
.explore { margin-top: 25px; height: 96px; border-radius: 8px; background: #4a79c7; display: flex; align-items: center; justify-content: space-between; padding: 0 24px; font-size: 32px; }
.panel h4 { font-size: 30px; margin-top: 56px; line-height: 38px; }
.recent { margin: 14px -24px 0; height: 72px; padding: 0 24px; background: #214dad; display: flex; align-items: center; gap: 17px; font-size: 28px; }
.recent span { margin-left: auto; color: #a8b4c4; }
.workspace { flex: 1; min-width: 0; background: #c3c6c7; display: flex; flex-direction: column; }
.doctabs { height: 81px; background: #bbc0c3; display: flex; align-items: flex-end; padding-left: 16px; border-bottom: 2px solid #aeb8bb; }
.doctab { width: 500px; height: 53px; display: flex; align-items: center; gap: 12px; padding: 0 24px 10px; font-size: 28px; color: #4b666d; }
.doctab.on { background: #c3c6c7; border-radius: 8px 8px 0 0; color: #4a79d2; }
.doctab .close { margin-left: auto; color: #9aa5a9; }
.faint { color: #8b9ea4; }
.docbar { height: 73px; border-bottom: 2px solid #b0bbbf; display: flex; align-items: center; justify-content: flex-end; gap: 12px; padding-right: 8px; color: #4b666d; font-size: 22px; }
.docbar > span { margin-right: 438px; }
.share { width: 142px; height: 48px; border-radius: 8px; background: #4a79d2; color: #c3c6c7; font-size: 27px; display: flex; align-items: center; justify-content: center; gap: 13px; }
.copy { width: 48px; height: 48px; border: 2px solid #4a79d2; border-radius: 8px; color: #4a79d2; display: flex; align-items: center; justify-content: center; }
.mapwrap { flex: 1; min-height: 0; display: flex; }
.mapcol { flex: 1; min-width: 0; }
.maptools { height: 71px; border-bottom: 2px solid #a9afb2; display: flex; gap: 6px; align-items: center; justify-content: flex-end; padding-right: 27px; color: #36474d; }
.pdf { width: 96px; height: 44px; background: #b1bbbe; border-radius: 6px; font-size: 25px; }
.grp { display: flex; gap: 2px; }
.grp button { height: 44px; width: 71px; background: #b1bbbe; display: flex; align-items: center; justify-content: center; gap: 14px; border-radius: 6px 0 0 6px; }
.grp button + button { width: 44px; border-radius: 0 6px 6px 0; }
.map { width: 100%; font-family: "DejaVu Sans Mono", monospace; fill: #111; }
.site { font-size: 22px; }
.arc { font-size: 20px; }
.tick { font-size: 18px; font-weight: 700; text-anchor: middle; }
.name { font-size: 38px; font-weight: 700; text-anchor: middle; }
.size { font-size: 26px; text-anchor: middle; }
.tools { width: 83px; border-left: 2px solid #b0bbbf; padding: 39px 0 0 12px; display: flex; flex-direction: column; align-items: center; gap: 76px; color: #4b666d; }
.tools svg { width: 24px; height: 24px; }
.bottombar { height: 50px; border-top: 2px solid #98a4a8; background: linear-gradient(90deg, #b1bbbe, #a5b1b4); display: flex; color: #36474d; font-weight: 700; }
.bottombar .bases { width: 176px; padding-left: 20px; font-weight: 400; font-size: 24px; border-right: 2px solid #9ba7ab; line-height: 46px; }
.asm { margin-left: auto; width: 282px; background: #b1bbbe; border-left: 2px solid #98a4a8; display: flex; align-items: center; justify-content: center; gap: 12px; }
.split { width: 255px; background: #98a7aa; }
.bottombar button { font-size: 23px; font-weight: 700; line-height: 46px; }
.edge { width: 16px; background: #c9d8d9; border-bottom: 14px solid #f8f8f8; }
.help { position: absolute; right: 8px; bottom: 58px; width: 84px; height: 84px; border-radius: 50%; background: #5091fd; color: #fff; font-weight: 900; font-size: 40px; box-shadow: 0 4px 12px rgba(0,0,0,.25); }

/* import dialog */
.overlay { position: absolute; inset: 0 16px 0 0; display: flex; justify-content: center; padding: 63px 0 49px; color: #36474d; line-height: 34px; }
.modal { width: 1757px; background: #fff; border-radius: 6px; box-shadow: 0 6px 34px rgba(0,0,0,.5), 0 0 0 2px rgba(0,0,0,.25); display: flex; flex-direction: column; }
.mtabs { margin: 0 32px; padding-top: 30px; display: flex; gap: 36px; border-bottom: 2px solid #e6eff2; font-size: 22px; line-height: 36px; color: #58757d; }
.mtabs a { padding-bottom: 10px; margin-bottom: -2px; border-bottom: 2px solid transparent; }
.mtabs .on { color: #5091fd; border-color: #5091fd; }
.mbody { flex: 1; padding: 46px 62px 0; }
.examples { display: grid; grid-template-columns: 800px 1fr; margin: 20px 0 29px; color: #a3b7bd; }
.examples ul { padding: 0 20px 0 80px; }
.examples li::marker { color: #36474d; }
.mbody a { color: #5091fd; }
.searchrow { position: relative; display: flex; gap: 12px; margin-top: 39px; }
input:not([type=checkbox]), select { height: 56px; width: 406px; border: 2px solid #cad9dd; border-radius: 4px; background: #fff; padding: 0 20px; outline: 0; }
.searchrow .focused { width: 506px; border-color: #5091fd; }
.caret { position: absolute; left: 238px; top: 11px; height: 34px; border-left: 2px solid #222; }
.primary { width: 128px; height: 56px; border-radius: 6px; background: #5091fd; color: #fff; font-size: 28px; }
.form { display: grid; grid-template-columns: 846px 1fr; }
.left { display: flex; padding-top: 73px; }
.ensembl { width: 120px; height: 110px; margin-top: 20px; }
.rows { display: grid; grid-template-columns: 220px 406px; column-gap: 40px; align-items: start; }
.rows > label, .lab { text-align: right; font-weight: 700; line-height: 56px; }
.rows > .short { line-height: 34px; }
.sel { position: relative; }
.sel select { appearance: none; padding: 4px 48px 0 28px; }
.sel svg { position: absolute; right: 8px; top: 18px; }
.hint { font-size: 22px; color: #58757d; margin: 3px 0 20px; white-space: nowrap; }
.gene { margin-bottom: 40px; }
.tick-row { display: flex; align-items: flex-end; gap: 6px; margin-top: 4px; }
.tick-row input { width: 26px; height: 26px; margin: 0 0 8px; accent-color: #0a74ff; }
.trans { margin-top: 20px; }
.rows > .inset { padding-right: 34px; margin-top: 20px; }
.cdna { margin: 15px 0 19px; }
.rows .up { margin-bottom: 40px; }
.right { padding-top: 32px; }
.right > label, .saveto { display: block; font-weight: 700; }
.right > input { margin: 10px 0 41px; }
.right > input:not([type=checkbox]) { width: 504px; }
.saverow { display: flex; gap: 60px; margin-top: 20px; }
.proj { width: 504px; height: 56px; border: 2px solid #cad9dd; border-radius: 6px; background: #e6eff2; display: flex; align-items: center; justify-content: center; gap: 7px; }
.import { width: 200px; height: 56px; border: 2px solid #0aab9c; border-radius: 6px; background: #0bcab9; color: #fff; font-weight: 700; font-size: 22px; }
.modal footer { border-top: 2px solid #e6eff2; padding: 29px 32px 33px; display: flex; justify-content: flex-end; }
.closebtn { width: 130px; height: 72px; border-radius: 6px; background: #e6eff2; font-size: 27px; }

/* download shelf */
.downloads { height: 113px; display: flex; align-items: center; border-top: 2px solid #5c5d60; padding: 0 26px 2px 44px; }
.fname { margin-left: 30px; width: 318px; font-size: 26px; }
.up-ch { color: #c8c8c8; }
.downloads .bar { height: 88px; margin-left: 36px; }
.all { margin-left: auto; width: 176px; height: 64px; border: 2px solid #3d3e41; border-radius: 8px; color: #8ab4f8; font-size: 22px; font-weight: 600; }
.dx { margin-left: 26px; color: #ddd; }
.cursor { position: absolute; left: 1890px; top: 1166px; width: 24px; height: 34px; }

/* dock */
.dock { position: absolute; left: 551px; right: 550px; bottom: 10px; height: 78px; background: #212121; border: 2px solid #525252; border-radius: 20px; display: flex; gap: 12px; align-items: center; padding: 0 0 6px 9px; }
.dock span { position: relative; width: 48px; height: 48px; flex: none; }
.dock svg { width: 48px; height: 48px; }
.run::after { content: ""; position: absolute; left: 21px; top: 56px; width: 6px; height: 6px; border-radius: 50%; background: #9a9a9a; }
.dock .cal { background: #fff; border-radius: 10px; overflow: hidden; text-align: center; color: #222; display: flex; flex-direction: column; }
.cal em { background: #fb3b30; color: #fff; font: 700 10px/15px Inter, "Noto Sans CJK JP", sans-serif; }
.cal strong { font: 400 25px/32px Inter, sans-serif; }
.live { background: #9f9f9f; text-align: center; font-size: 21px; line-height: 48px; }
.adobe { border-radius: 10px; text-align: center; font-weight: 600; font-size: 26px; line-height: 48px; }
.ai { background: #330000; color: #ff9a00; }
.ps { background: #001e36; color: #31a8ff; }
.dsep { width: 2px; height: 58px; background: #555; margin: 0 6px 0 7px; }
```
